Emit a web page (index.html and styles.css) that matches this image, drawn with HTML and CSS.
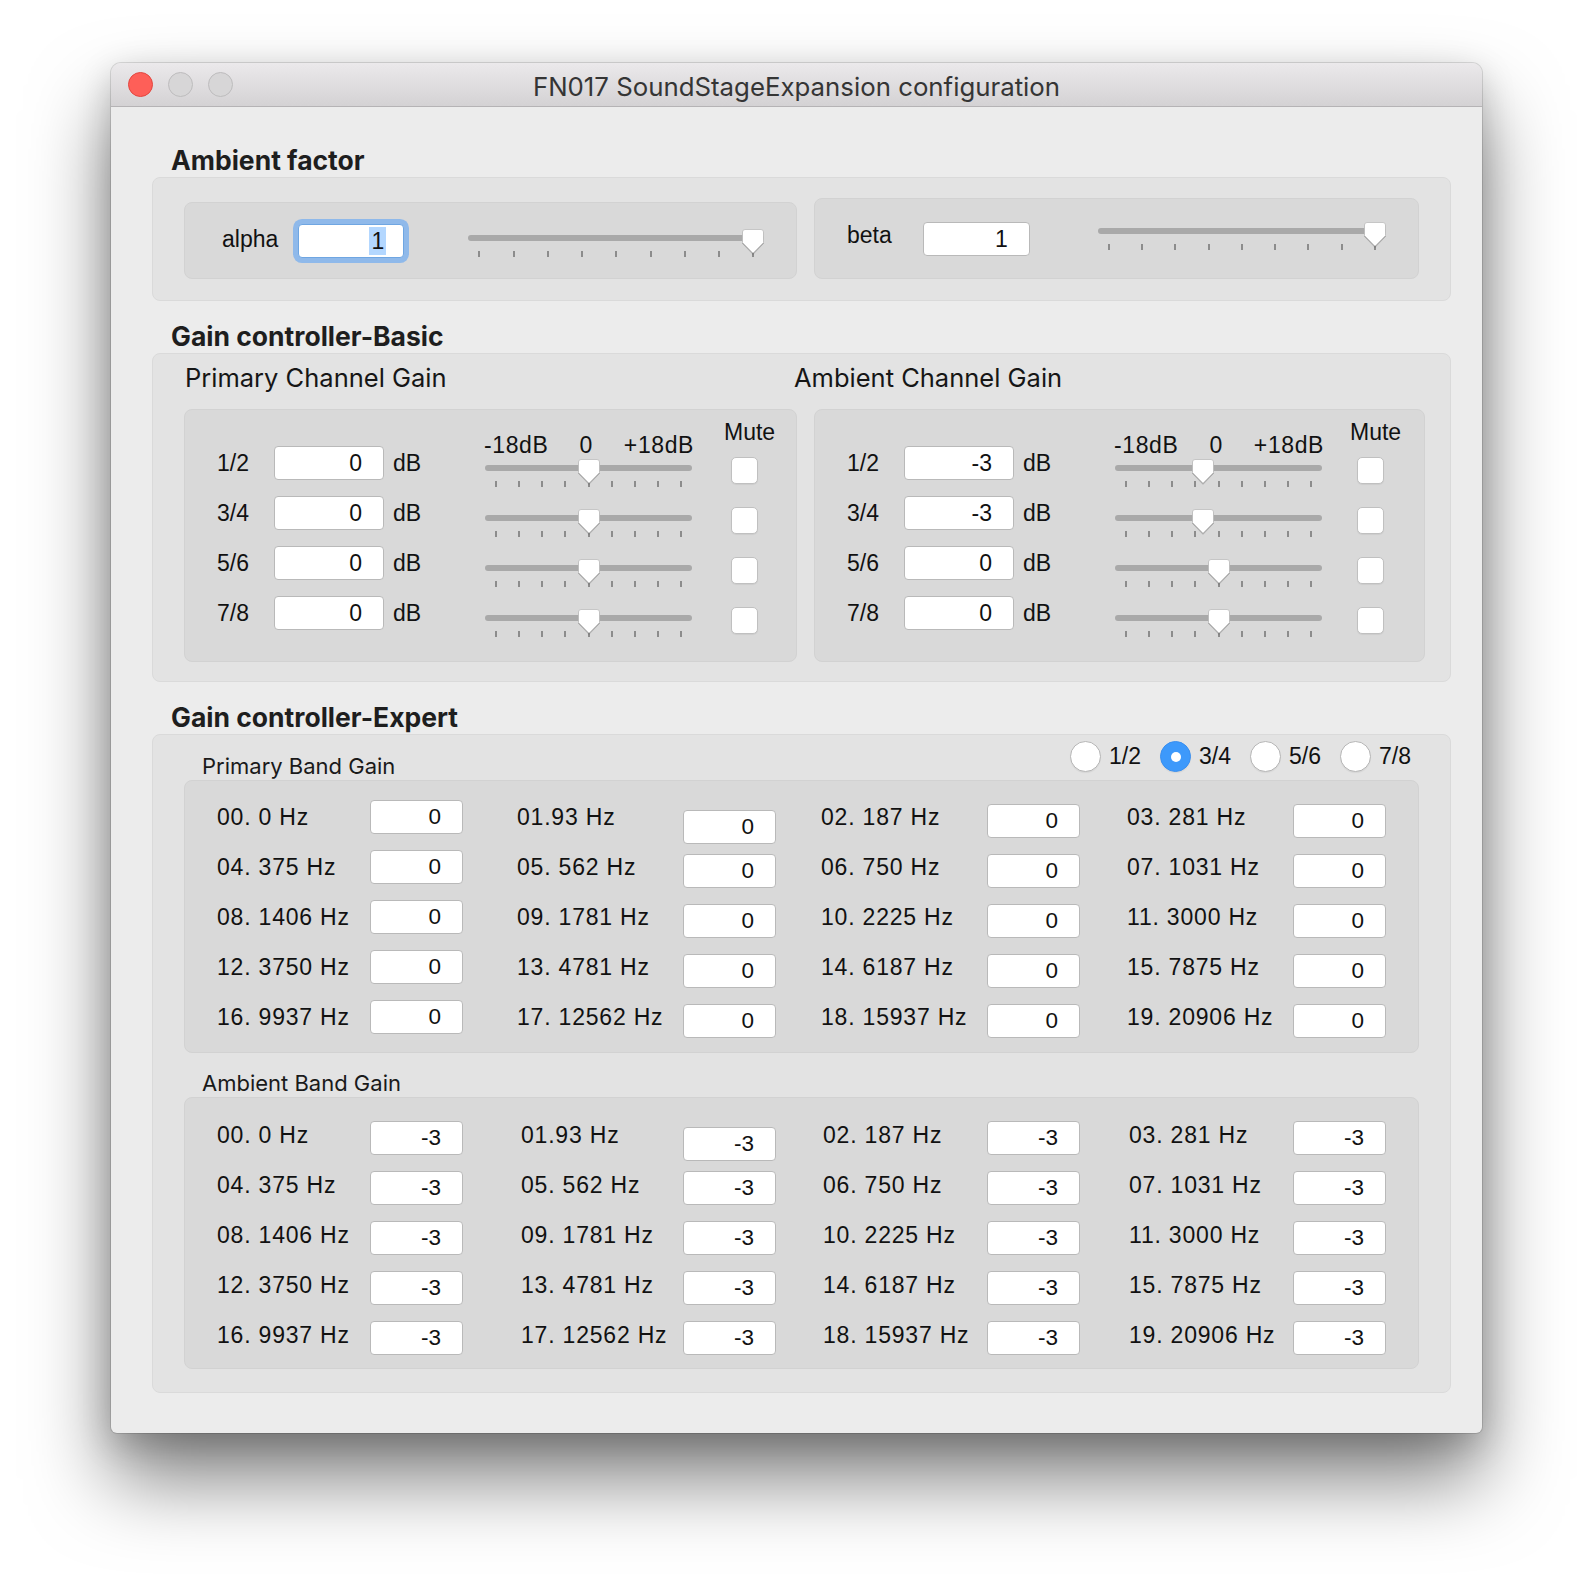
FILE: index.html
```html
<!DOCTYPE html>
<html>
<head>
<meta charset="utf-8">
<title>FN017 SoundStageExpansion configuration</title>
<link rel="stylesheet" href="styles.css">
</head>
<body>
<div class="window">
  <div class="titlebar">
    <div class="lights">
      <span class="light light-close"></span>
      <span class="light"></span>
      <span class="light"></span>
    </div>
    <div class="title">FN017 SoundStageExpansion configuration</div>
    <div></div>
  </div>

  <div class="content">
    <!-- Ambient factor -->
    <h2 class="sec-title first">Ambient factor</h2>
    <div class="group group-factor">
      <div class="panel factor factor-alpha">
        <span class="lbl factor-label">alpha</span>
        <span class="field field-factor field-focus"><span class="sel">1</span></span>
        <div class="slider slider-factor" style="--v:1">
          <div class="track"></div>
          <div class="ticks"><i></i><i></i><i></i><i></i><i></i><i></i><i></i><i></i><i></i></div>
          <svg class="knob" viewBox="0 0 22 25"><path d="M3 0.5H19Q21.5 0.5 21.5 3V13.5L11 24.3L0.5 13.5V3Q0.5 0.5 3 0.5Z"/></svg>
        </div>
      </div>
      <div class="panel factor factor-beta">
        <span class="lbl factor-label">beta</span>
        <span class="field field-factor">1</span>
        <div class="slider slider-factor" style="--v:1">
          <div class="track"></div>
          <div class="ticks"><i></i><i></i><i></i><i></i><i></i><i></i><i></i><i></i><i></i></div>
          <svg class="knob" viewBox="0 0 22 25"><path d="M3 0.5H19Q21.5 0.5 21.5 3V13.5L11 24.3L0.5 13.5V3Q0.5 0.5 3 0.5Z"/></svg>
        </div>
      </div>
    </div>

    <!-- Gain controller-Basic -->
    <h2 class="sec-title">Gain controller-Basic</h2>
    <div class="group group-basic">
      <div class="channel">
        <div class="channel-title">Primary Channel Gain</div>
        <div class="panel basic">
          <div class="basic-rows">
            <span class="lbl">1/2</span><span class="field field-basic">0</span><span class="lbl unit">dB</span>
            <span class="lbl">3/4</span><span class="field field-basic">0</span><span class="lbl unit">dB</span>
            <span class="lbl">5/6</span><span class="field field-basic">0</span><span class="lbl unit">dB</span>
            <span class="lbl">7/8</span><span class="field field-basic">0</span><span class="lbl unit">dB</span>
          </div>
          <div class="basic-sliders">
            <div class="scale lbl"><span>-18dB</span><span>0</span><span>+18dB</span></div>
            <div class="slider slider-basic" style="--v:0.5"><div class="track"></div><div class="ticks"><i></i><i></i><i></i><i></i><i></i><i></i><i></i><i></i><i></i></div><svg class="knob" viewBox="0 0 22 25"><path d="M3 0.5H19Q21.5 0.5 21.5 3V13.5L11 24.3L0.5 13.5V3Q0.5 0.5 3 0.5Z"/></svg></div>
            <div class="slider slider-basic" style="--v:0.5"><div class="track"></div><div class="ticks"><i></i><i></i><i></i><i></i><i></i><i></i><i></i><i></i><i></i></div><svg class="knob" viewBox="0 0 22 25"><path d="M3 0.5H19Q21.5 0.5 21.5 3V13.5L11 24.3L0.5 13.5V3Q0.5 0.5 3 0.5Z"/></svg></div>
            <div class="slider slider-basic" style="--v:0.5"><div class="track"></div><div class="ticks"><i></i><i></i><i></i><i></i><i></i><i></i><i></i><i></i><i></i></div><svg class="knob" viewBox="0 0 22 25"><path d="M3 0.5H19Q21.5 0.5 21.5 3V13.5L11 24.3L0.5 13.5V3Q0.5 0.5 3 0.5Z"/></svg></div>
            <div class="slider slider-basic" style="--v:0.5"><div class="track"></div><div class="ticks"><i></i><i></i><i></i><i></i><i></i><i></i><i></i><i></i><i></i></div><svg class="knob" viewBox="0 0 22 25"><path d="M3 0.5H19Q21.5 0.5 21.5 3V13.5L11 24.3L0.5 13.5V3Q0.5 0.5 3 0.5Z"/></svg></div>
          </div>
          <div class="mute">
            <span class="lbl mute-label">Mute</span>
            <span class="check"></span>
            <span class="check"></span>
            <span class="check"></span>
            <span class="check"></span>
          </div>
        </div>
      </div>
      <div class="channel channel-right">
        <div class="channel-title">Ambient Channel Gain</div>
        <div class="panel basic">
          <div class="basic-rows">
            <span class="lbl">1/2</span><span class="field field-basic">-3</span><span class="lbl unit">dB</span>
            <span class="lbl">3/4</span><span class="field field-basic">-3</span><span class="lbl unit">dB</span>
            <span class="lbl">5/6</span><span class="field field-basic">0</span><span class="lbl unit">dB</span>
            <span class="lbl">7/8</span><span class="field field-basic">0</span><span class="lbl unit">dB</span>
          </div>
          <div class="basic-sliders">
            <div class="scale lbl"><span>-18dB</span><span>0</span><span>+18dB</span></div>
            <div class="slider slider-basic" style="--v:0.4167"><div class="track"></div><div class="ticks"><i></i><i></i><i></i><i></i><i></i><i></i><i></i><i></i><i></i></div><svg class="knob" viewBox="0 0 22 25"><path d="M3 0.5H19Q21.5 0.5 21.5 3V13.5L11 24.3L0.5 13.5V3Q0.5 0.5 3 0.5Z"/></svg></div>
            <div class="slider slider-basic" style="--v:0.4167"><div class="track"></div><div class="ticks"><i></i><i></i><i></i><i></i><i></i><i></i><i></i><i></i><i></i></div><svg class="knob" viewBox="0 0 22 25"><path d="M3 0.5H19Q21.5 0.5 21.5 3V13.5L11 24.3L0.5 13.5V3Q0.5 0.5 3 0.5Z"/></svg></div>
            <div class="slider slider-basic" style="--v:0.5"><div class="track"></div><div class="ticks"><i></i><i></i><i></i><i></i><i></i><i></i><i></i><i></i><i></i></div><svg class="knob" viewBox="0 0 22 25"><path d="M3 0.5H19Q21.5 0.5 21.5 3V13.5L11 24.3L0.5 13.5V3Q0.5 0.5 3 0.5Z"/></svg></div>
            <div class="slider slider-basic" style="--v:0.5"><div class="track"></div><div class="ticks"><i></i><i></i><i></i><i></i><i></i><i></i><i></i><i></i><i></i></div><svg class="knob" viewBox="0 0 22 25"><path d="M3 0.5H19Q21.5 0.5 21.5 3V13.5L11 24.3L0.5 13.5V3Q0.5 0.5 3 0.5Z"/></svg></div>
          </div>
          <div class="mute">
            <span class="lbl mute-label">Mute</span>
            <span class="check"></span>
            <span class="check"></span>
            <span class="check"></span>
            <span class="check"></span>
          </div>
        </div>
      </div>
    </div>

    <!-- Gain controller-Expert -->
    <h2 class="sec-title">Gain controller-Expert</h2>
    <div class="group group-expert">
      <div class="expert-head">
        <div class="band-title">Primary Band Gain</div>
        <div class="radios">
          <span class="radio-item"><span class="radio"></span><span class="lbl">1/2</span></span>
          <span class="radio-item"><span class="radio radio-on"></span><span class="lbl">3/4</span></span>
          <span class="radio-item"><span class="radio"></span><span class="lbl">5/6</span></span>
          <span class="radio-item"><span class="radio"></span><span class="lbl">7/8</span></span>
        </div>
      </div>
      <div class="panel bands bands-primary">
        <div class="band"><span class="lbl freq">00. 0 Hz</span><span class="field field-band">0</span></div>
        <div class="band"><span class="lbl freq">01.93 Hz</span><span class="field field-band drop">0</span></div>
        <div class="band"><span class="lbl freq">02. 187 Hz</span><span class="field field-band">0</span></div>
        <div class="band"><span class="lbl freq">03. 281 Hz</span><span class="field field-band">0</span></div>
        <div class="band"><span class="lbl freq">04. 375 Hz</span><span class="field field-band">0</span></div>
        <div class="band"><span class="lbl freq">05. 562 Hz</span><span class="field field-band">0</span></div>
        <div class="band"><span class="lbl freq">06. 750 Hz</span><span class="field field-band">0</span></div>
        <div class="band"><span class="lbl freq">07. 1031 Hz</span><span class="field field-band">0</span></div>
        <div class="band"><span class="lbl freq">08. 1406 Hz</span><span class="field field-band">0</span></div>
        <div class="band"><span class="lbl freq">09. 1781 Hz</span><span class="field field-band">0</span></div>
        <div class="band"><span class="lbl freq">10. 2225 Hz</span><span class="field field-band">0</span></div>
        <div class="band"><span class="lbl freq">11. 3000 Hz</span><span class="field field-band">0</span></div>
        <div class="band"><span class="lbl freq">12. 3750 Hz</span><span class="field field-band">0</span></div>
        <div class="band"><span class="lbl freq">13. 4781 Hz</span><span class="field field-band">0</span></div>
        <div class="band"><span class="lbl freq">14. 6187 Hz</span><span class="field field-band">0</span></div>
        <div class="band"><span class="lbl freq">15. 7875 Hz</span><span class="field field-band">0</span></div>
        <div class="band"><span class="lbl freq">16. 9937 Hz</span><span class="field field-band">0</span></div>
        <div class="band"><span class="lbl freq">17. 12562 Hz</span><span class="field field-band">0</span></div>
        <div class="band"><span class="lbl freq">18. 15937 Hz</span><span class="field field-band">0</span></div>
        <div class="band"><span class="lbl freq">19. 20906 Hz</span><span class="field field-band">0</span></div>
      </div>

      <div class="band-title band-title-ambient">Ambient Band Gain</div>
      <div class="panel bands bands-ambient">
        <div class="band"><span class="lbl freq">00. 0 Hz</span><span class="field field-band">-3</span></div>
        <div class="band"><span class="lbl freq">01.93 Hz</span><span class="field field-band drop">-3</span></div>
        <div class="band"><span class="lbl freq">02. 187 Hz</span><span class="field field-band">-3</span></div>
        <div class="band"><span class="lbl freq">03. 281 Hz</span><span class="field field-band">-3</span></div>
        <div class="band"><span class="lbl freq">04. 375 Hz</span><span class="field field-band">-3</span></div>
        <div class="band"><span class="lbl freq">05. 562 Hz</span><span class="field field-band">-3</span></div>
        <div class="band"><span class="lbl freq">06. 750 Hz</span><span class="field field-band">-3</span></div>
        <div class="band"><span class="lbl freq">07. 1031 Hz</span><span class="field field-band">-3</span></div>
        <div class="band"><span class="lbl freq">08. 1406 Hz</span><span class="field field-band">-3</span></div>
        <div class="band"><span class="lbl freq">09. 1781 Hz</span><span class="field field-band">-3</span></div>
        <div class="band"><span class="lbl freq">10. 2225 Hz</span><span class="field field-band">-3</span></div>
        <div class="band"><span class="lbl freq">11. 3000 Hz</span><span class="field field-band">-3</span></div>
        <div class="band"><span class="lbl freq">12. 3750 Hz</span><span class="field field-band">-3</span></div>
        <div class="band"><span class="lbl freq">13. 4781 Hz</span><span class="field field-band">-3</span></div>
        <div class="band"><span class="lbl freq">14. 6187 Hz</span><span class="field field-band">-3</span></div>
        <div class="band"><span class="lbl freq">15. 7875 Hz</span><span class="field field-band">-3</span></div>
        <div class="band"><span class="lbl freq">16. 9937 Hz</span><span class="field field-band">-3</span></div>
        <div class="band"><span class="lbl freq">17. 12562 Hz</span><span class="field field-band">-3</span></div>
        <div class="band"><span class="lbl freq">18. 15937 Hz</span><span class="field field-band">-3</span></div>
        <div class="band"><span class="lbl freq">19. 20906 Hz</span><span class="field field-band">-3</span></div>
      </div>
    </div>
  </div>
</div>
</body>
</html>
```

FILE: styles.css
```css
* { box-sizing: border-box; }

html, body {
  margin: 0;
  padding: 0;
  background: #ffffff;
}

body {
  height: 1594px;
  overflow: hidden;
  padding: 63px 0 0 111px;
  font-family: "Liberation Sans", Arial, sans-serif;
  color: #111;
}

.window {
  width: 1371px;
  height: 1370px;
  background: #ececec;
  border-radius: 10px 10px 6px 6px;
  box-shadow: 0 0 0 1px rgba(0,0,0,0.12), 0 46px 80px rgba(0,0,0,0.5), 0 10px 34px rgba(0,0,0,0.18);
  overflow: hidden;
}

/* ---------- title bar ---------- */
.titlebar {
  height: 44px;
  display: grid;
  grid-template-columns: 1fr auto 1fr;
  align-items: center;
  background: linear-gradient(#ebe9eb, #d4d2d4);
  border-bottom: 1px solid #b5b3b5;
}

.lights {
  display: flex;
  gap: 15px;
  padding-left: 17px;
}

.light {
  width: 25px;
  height: 25px;
  border-radius: 50%;
  background: #d7d6d7;
  border: 1px solid #bdbcbd;
}

.light-close {
  background: #fe5f58;
  border-color: #e2463f;
}

.title {
  font-family: Inter, "Liberation Sans", sans-serif;
  font-size: 25.8px;
  padding-top: 3px;
  color: #353535;
}

/* ---------- content ---------- */
.content {
  padding: 36px 31px 0 41px;
}

.sec-title {
  margin: 18px 0 0 0;
  padding-left: 19px;
  font-family: Inter, "Liberation Sans", sans-serif;
  font-weight: 700;
  font-size: 26.5px;
  line-height: 34px;
  color: #1e1e1e;
}

.sec-title.first {
  margin-top: 0;
}

.group {
  background: #e3e3e3;
  border: 1px solid #dadada;
  border-radius: 8px;
}

.panel {
  background: #d9d9d9;
  border: 1px solid #d2d2d2;
  border-radius: 8px;
}

.lbl {
  font-family: "Liberation Sans", Arial, sans-serif;
  font-size: 23px;
  color: #111;
  white-space: nowrap;
}

/* ---------- fields ---------- */
.field {
  display: flex;
  align-items: center;
  justify-content: flex-end;
  height: 34px;
  padding-right: 21px;
  background: #fff;
  border: 1px solid #b9b9b9;
  border-radius: 4px;
  font-family: "Liberation Sans", Arial, sans-serif;
  font-size: 23px;
  color: #111;
}

.field-focus {
  border-color: #6fa6e2;
  box-shadow: 0 0 0 5px #8fb9ea;
  border-radius: 4px;
}

.sel {
  background: #b3d7ff;
  height: 28px;
  display: flex;
  align-items: center;
  padding: 0 2px;
  margin-right: -2px;
}

/* ---------- slider ---------- */
.slider {
  position: relative;
  height: 29px;
  padding-top: 6px;
}

.track {
  height: 6px;
  border-radius: 3px;
  background: #a9a9a9;
}

.ticks {
  display: flex;
  justify-content: space-between;
  padding: 0 10px;
  margin-top: 10px;
}

.ticks i {
  display: block;
  width: 2px;
  height: 6px;
  background: #8c8c8c;
}

.knob {
  position: absolute;
  top: 0;
  left: calc((100% - 22px) * var(--v));
  width: 22px;
  height: 25px;
  filter: drop-shadow(0 1px 0.6px rgba(0,0,0,0.25));
}

.knob path {
  fill: #fff;
  stroke: #bcbcbc;
  stroke-width: 0.8;
}

/* ---------- ambient factor ---------- */
.group-factor {
  height: 124px;
  display: flex;
  align-items: flex-end;
  gap: 17px;
  padding: 0 31px 21px 31px;
}

.factor {
  display: flex;
  align-items: flex-start;
}

.factor-alpha {
  width: 613px;
  height: 77px;
  padding-left: 37px;
}

.factor-beta {
  width: 605px;
  height: 81px;
  padding-left: 32px;
}

.factor-label {
  line-height: 28px;
  margin-top: 22px;
}

.field-factor {
  width: 106px;
}

.factor-alpha .field-factor {
  margin: 21px 0 0 20px;
  padding-right: 19px;
}

.factor-beta .field-factor {
  width: 107px;
  margin: 23px 0 0 31px;
}

.slider-factor {
  width: 296px;
}

.factor-alpha .slider-factor { margin: 26px 0 0 64px; }
.factor-beta .slider-factor { width: 288px; margin: 23px 0 0 68px; }

/* ---------- basic ---------- */
.group-basic {
  height: 329px;
  display: flex;
  gap: 17px;
  padding: 7px 0 0 31px;
}

.channel {
  width: 613px;
}

.channel-right {
  width: 611px;
}

.channel-title {
  font-family: Inter, "Liberation Sans", sans-serif;
  font-size: 25.5px;
  line-height: 34px;
  color: #161616;
  padding-left: 1px;
}

.channel-right .channel-title {
  margin-left: -21px;
}

.basic {
  margin-top: 14px;
  height: 253px;
  display: flex;
}

.basic-rows {
  display: grid;
  grid-template-columns: 57px 110px 101px;
  grid-auto-rows: 50px;
  align-items: center;
  padding: 28px 0 0 32px;
}

.unit {
  padding-left: 9px;
}

.basic-sliders {
  width: 207px;
  padding-top: 22px;
}

.scale {
  display: flex;
  justify-content: space-between;
  line-height: 26px;
  height: 27px;
  margin: 0 -2px 0 -1px;
  letter-spacing: 0.6px;
}

.slider-basic {
  height: 50px;
}

.mute {
  display: flex;
  flex-direction: column;
  padding: 9px 0 0 32px;
}

.channel-right .mute {
  padding-left: 28px;
}

.mute-label {
  line-height: 26px;
}

.check {
  display: block;
  width: 27px;
  height: 27px;
  margin: 12px 0 11px 7px;
  background: #fff;
  border: 1px solid #c0c0c0;
  border-radius: 5px;
  box-shadow: 0 1px 1px rgba(0,0,0,0.06);
}

/* ---------- expert ---------- */
.group-expert {
  height: 659px;
  padding: 0 31px 0 31px;
}

.expert-head {
  display: flex;
  justify-content: space-between;
  align-items: flex-start;
  height: 45px;
}

.band-title {
  font-family: Inter, "Liberation Sans", sans-serif;
  font-size: 22px;
  line-height: 26px;
  color: #1a1a1a;
  padding-left: 18px;
  margin-top: 18px;
}

.band-title-ambient {
  margin-top: 17px;
  margin-bottom: 1px;
}

.radios {
  display: flex;
  margin-top: 6px;
  margin-right: 8px;
}

.radio-item {
  display: flex;
  align-items: center;
  gap: 8px;
  width: 90px;
}

.radio-item:last-child {
  width: auto;
}

.radio {
  width: 31px;
  height: 31px;
  border-radius: 50%;
  background: #fff;
  border: 1px solid #b6b6b6;
  box-shadow: 0 1px 1px rgba(0,0,0,0.06);
}

.radio-on {
  background: #3d99fb;
  border-color: #3a8ff0;
  display: flex;
  align-items: center;
  justify-content: center;
}

.radio-on::after {
  content: "";
  width: 10px;
  height: 10px;
  border-radius: 50%;
  background: #fff;
}

.bands {
  display: grid;
  grid-template-columns: 300px 304px 306px 1fr;
  grid-auto-rows: 50px;
  align-items: center;
  padding: 11px 0 0 32px;
  height: 273px;
}

.bands-ambient {
  height: 272px;
  padding-top: 12px;
}

.band {
  display: flex;
  align-items: center;
}

.freq {
  width: 166px;
  font-size: 23px;
  letter-spacing: 0.8px;
}

.band:nth-child(4n+1) .freq {
  width: 153px;
}

.bands-ambient .band:nth-child(4n+2) .freq { padding-left: 4px; }
.bands-ambient .band:nth-child(4n+3) .freq,
.bands-ambient .band:nth-child(4n) .freq { padding-left: 2px; }

.field-band {
  width: 93px;
  font-size: 22.5px;
}

.band:not(:nth-child(4n+1)) .field-band {
  margin-top: 8px;
}

.bands-ambient .field-band {
  margin-top: 6px;
}

.bands-ambient .band:not(:nth-child(4n+1)) .field-band {
  margin-top: 6px;
}

.bands .band .field-band.drop {
  margin-top: 20px;
}

.bands-ambient .band .field-band.drop {
  margin-top: 17px;
}
```
